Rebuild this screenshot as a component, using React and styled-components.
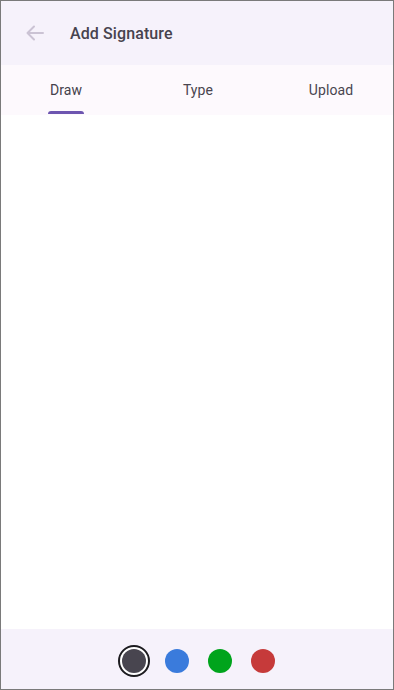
import React, { useState } from "react";
import styled, { createGlobalStyle } from "styled-components";

const GlobalStyle = createGlobalStyle`
  html, body {
    margin: 0;
    padding: 0;
    background: #ffffff;
  }
  * {
    box-sizing: border-box;
  }
`;

const tabs = ["Draw", "Type", "Upload"];
const colors = ["#48454f", "#3a7bdc", "#00a41c", "#c63a3a"];

const App = () => {
  const [tab, setTab] = useState(0);
  const [color, setColor] = useState(0);

  return (
    <>
      <GlobalStyle />
      <SScreen>
        <SHeader>
          <SBackButton aria-label="Back">
            <svg width="24" height="24" viewBox="0 0 24 24" fill="none">
              <path
                d="M20 12H4.5M11 5.5L4.5 12l6.5 6.5"
                stroke="#cbc3d4"
                strokeWidth="2"
                strokeLinecap="round"
                strokeLinejoin="round"
              />
            </svg>
          </SBackButton>
          <STitle>Add Signature</STitle>
        </SHeader>
        <STabRow>
          {tabs.map((t, i) => (
            <STab key={t} onClick={() => setTab(i)}>
              <STabLabel active={i === tab}>{t}</STabLabel>
              {i === tab && <STabIndicator />}
            </STab>
          ))}
        </STabRow>
        <SCanvas />
        <SFooter>
          {colors.map((c, i) => (
            <SSwatchRing key={c} selected={i === color} onClick={() => setColor(i)}>
              <SSwatch color={c} />
            </SSwatchRing>
          ))}
        </SFooter>
      </SScreen>
    </>
  );
};

const SScreen = styled.div`
  width: 394px;
  height: 690px;
  border: solid 1px #7a7a7a;
  display: flex;
  flex-direction: column;
  background: #ffffff;
  font-family: Roboto, "Noto Sans", sans-serif;
  overflow: hidden;
`;

const SHeader = styled.div`
  height: 64px;
  flex-shrink: 0;
  display: flex;
  align-items: center;
  background: #f6f2fb;
  padding-left: 22px;
`;

const SBackButton = styled.div`
  width: 24px;
  height: 24px;
  display: flex;
  align-items: center;
  justify-content: center;
  margin-right: 23px;
`;

const STitle = styled.div`
  font-size: 16px;
  font-weight: 500;
  color: #47434e;
  letter-spacing: 0.1px;
`;

const STabRow = styled.div`
  height: 50px;
  flex-shrink: 0;
  display: grid;
  grid-template-columns: 130px 134px 132px;
  background: #fdf9fd;
  overflow: hidden;
`;

const STab = styled.div`
  position: relative;
  display: flex;
  align-items: center;
  justify-content: center;
  cursor: pointer;
`;

const STabLabel = styled.span`
  font-size: 14px;
  color: ${props => (props.active ? "#44414b" : "#49454f")};
  letter-spacing: 0.1px;
`;

const STabIndicator = styled.div`
  position: absolute;
  bottom: 1px;
  left: 50%;
  width: 36px;
  margin-left: -18px;
  height: 3px;
  border-radius: 3px 3px 0 0;
  background: #6d55b0;
`;

const SCanvas = styled.div`
  flex: 1;
  background: #ffffff;
`;

const SFooter = styled.div`
  height: 60px;
  flex-shrink: 0;
  display: flex;
  align-items: center;
  justify-content: center;
  gap: 15px;
  background: #f6f2fb;
  padding: 4px 0 0 2px;
`;

const SSwatchRing = styled.div`
  width: 32px;
  height: 32px;
  border-radius: 50%;
  display: flex;
  align-items: center;
  justify-content: center;
  cursor: pointer;
  border: ${props => (props.selected ? "2px solid #1c1b1f" : "2px solid transparent")};
  background: ${props => (props.selected ? "#ffffff" : "transparent")};
  margin: 0 -2px;
`;

const SSwatch = styled.div`
  width: 24px;
  height: 24px;
  border-radius: 50%;
  background: ${props => props.color};
`;

export default App;
